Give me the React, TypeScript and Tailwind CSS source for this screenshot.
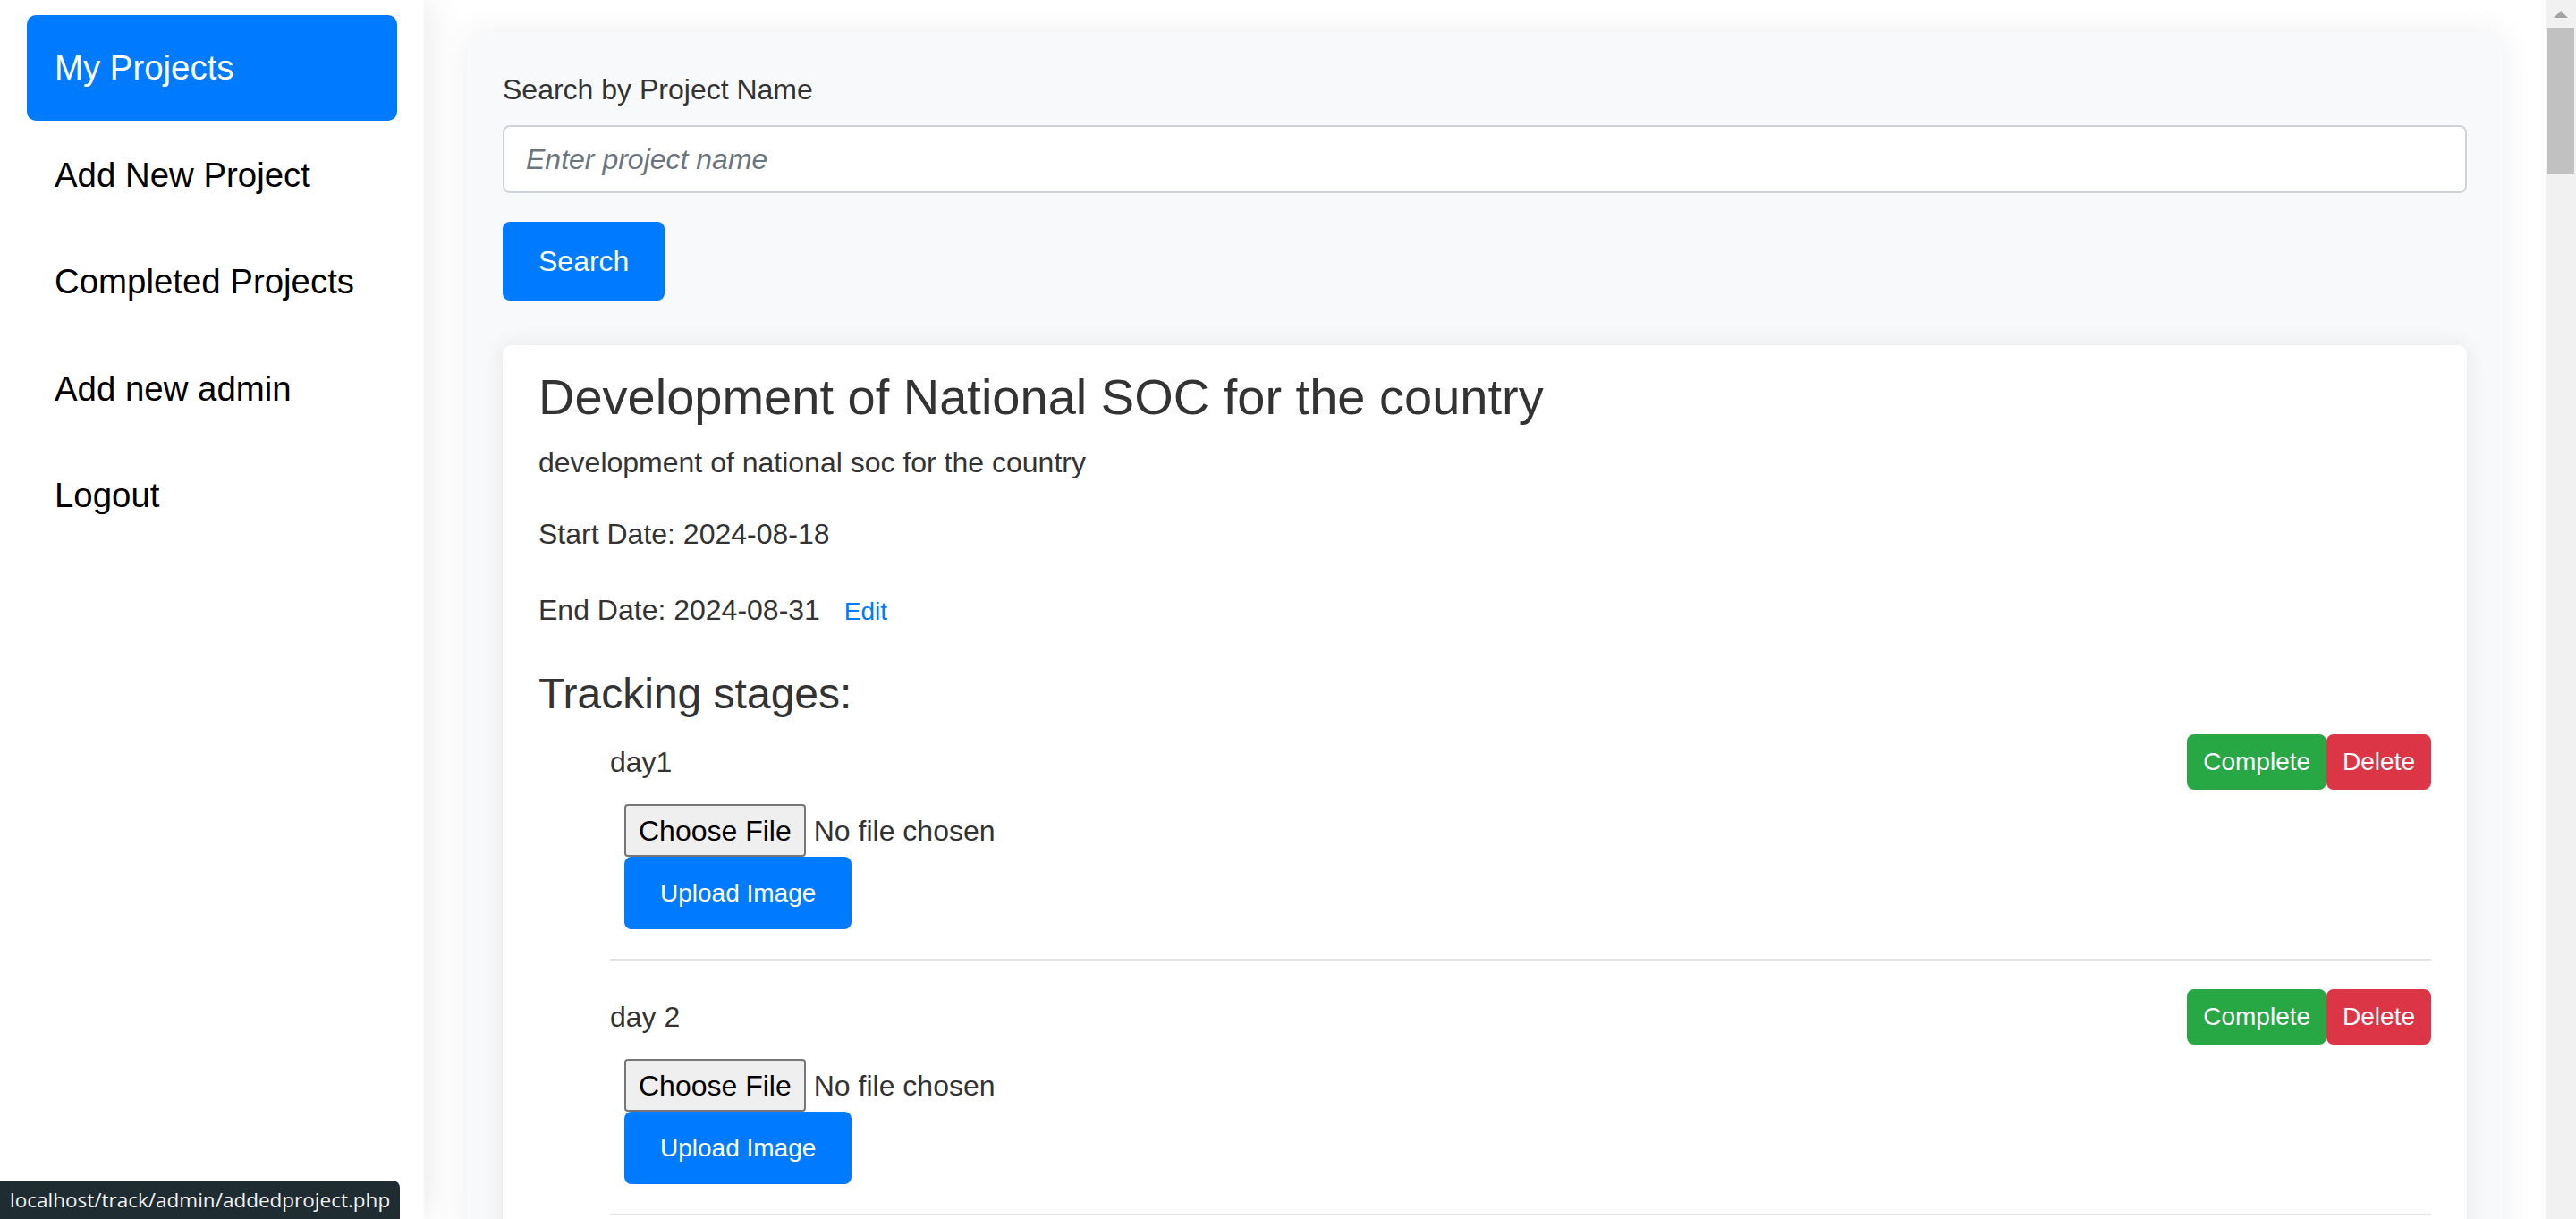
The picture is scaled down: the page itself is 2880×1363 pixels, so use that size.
import React from "react";

// Menú lateral del panel de administración
const menu = [
  { label: "My Projects", active: true },
  { label: "Add New Project" },
  { label: "Completed Projects" },
  { label: "Add new admin" },
  { label: "Logout" },
];

interface Stage {
  id: number;
  name: string;
}

const stages: Stage[] = [
  { id: 1, name: "day1" },
  { id: 2, name: "day 2" },
];

function StageItem({ stage }: { stage: Stage }) {
  return (
    <li className="pb-[33px] mb-[32px] border-b-2 border-[#e2e2e2]">
      <div className="flex items-center justify-between h-[62px]">
        <span className="text-[32px] leading-[48px] text-[#333]">{stage.name}</span>
        <div className="flex">
          <button className="px-[16px] py-[8px] text-[28px] leading-[42px] text-white bg-[#28a745] border-2 border-[#28a745] rounded-[8px]">
            Complete
          </button>
          <button className="px-[16px] py-[8px] text-[28px] leading-[42px] text-white bg-[#dc3545] border-2 border-[#dc3545] rounded-[8px]">
            Delete
          </button>
        </div>
      </div>
      <form className="pl-[16px] mt-[16px]">
        <div className="flex items-center h-[59px]">
          <span className="h-[59px] flex items-center px-[14px] border-2 border-[#767676] rounded-[4px] bg-[#efefef] text-[32px] text-black">
            Choose File
          </span>
          <span className="ml-[9px] text-[32px] text-[#333]">No file chosen</span>
        </div>
        <button
          type="button"
          className="block h-[81px] px-[40px] text-[28px] text-white bg-[#007bff] rounded-[8px]"
        >
          Upload Image
        </button>
      </form>
    </li>
  );
}

export default function App() {
  return (
    <div className="relative flex h-screen w-full overflow-hidden bg-white font-['Liberation_Sans',Arial,sans-serif]">
      {/* Sidebar */}
      <aside className="relative z-10 w-[474px] shrink-0 h-full bg-white pt-[17px] px-[30px] flex flex-col gap-[2px] shadow-[4px_0_40px_rgba(0,0,0,0.09)]">
        {menu.map((item) => (
          <a
            key={item.label}
            className={
              item.active
                ? "block py-[30px] pl-[31px] rounded-[10px] bg-[#007bff] text-white text-[38.4px] leading-[57.6px]"
                : "block py-[30px] pl-[31px] rounded-[10px] text-black text-[38.4px] leading-[57.6px]"
            }
          >
            {item.label}
          </a>
        ))}
      </aside>

      {/* Contenido */}
      <main className="flex-1 h-full overflow-hidden pt-[36px] px-[48px]">
        <div className="bg-[#f8f9fa] rounded-[16px] pt-[40px] px-[40px] pb-[40px] shadow-[0_0_36px_rgba(0,0,0,0.07)]">
          <label className="block text-[32px] leading-[48px] text-[#333] mb-[16px]">
            Search by Project Name
          </label>
          <input
            type="text"
            placeholder="Enter project name"
            className="block w-full h-[76px] px-[24px] bg-white border-2 border-[#ced4da] rounded-[8px] text-[32px] text-[#495057] placeholder:italic placeholder:text-[#6c757d] outline-none"
          />
          <button className="mt-[32px] h-[88px] px-[40px] bg-[#007bff] text-white text-[32px] rounded-[8px]">
            Search
          </button>

          <div className="mt-[50px] bg-white rounded-[10px] pt-[24px] px-[40px] pb-[40px] shadow-[0_0_24px_rgba(0,0,0,0.08)] text-[#333]">
            <h3 className="text-[56px] leading-[67px] mb-[16px]">
              Development of National SOC for the country
            </h3>
            <p className="text-[32px] leading-[48px] mb-[32px]">
              development of national soc for the country
            </p>
            <p className="text-[32px] leading-[48px] mb-[32px]">Start Date: 2024-08-18</p>
            <p className="text-[32px] leading-[48px] mb-[32px]">
              End Date: 2024-08-31{" "}
              <a className="inline-block px-[16px] py-[8px] border-2 border-transparent text-[28px] leading-[42px] text-[#007bff]">
                Edit
              </a>
            </p>
            <h4 className="text-[48px] leading-[58px] mb-[16px]">Tracking stages:</h4>
            <ul className="pl-[80px]">
              {stages.map((s) => (
                <StageItem key={s.id} stage={s} />
              ))}
            </ul>
          </div>
        </div>
      </main>

      {/* Barra de desplazamiento */}
      <div className="w-[34px] shrink-0 h-full bg-[#f1f1f1] flex flex-col items-center">
        <div className="h-[31px] flex items-center justify-center">
          <svg width="16" height="8" viewBox="0 0 16 8">
            <polygon points="8,0 16,8 0,8" fill="#a3a3a3" />
          </svg>
        </div>
        <div className="w-[30px] h-[163px] bg-[#c1c1c1]" />
      </div>

      {/* Barra de estado del navegador */}
      <div className="absolute left-0 bottom-0 z-20 h-[43px] flex items-center px-[11px] bg-[#1f2d33] rounded-tr-[8px] text-[#f2f2f2] text-[22.5px] font-['Open_Sans',sans-serif]">
        localhost/track/admin/addedproject.php
      </div>
    </div>
  );
}
